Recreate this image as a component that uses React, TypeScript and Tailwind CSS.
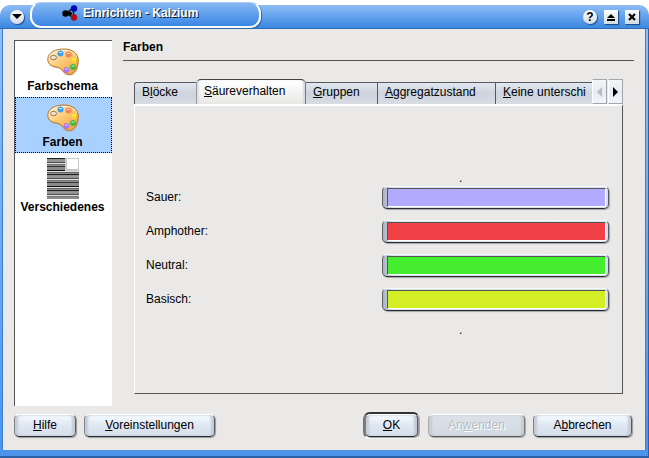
import { useState, type ReactNode } from "react";

function Palette() {
  return (
    <svg width="32" height="32" viewBox="0 0 32 32" aria-hidden="true">
      <defs>
        <linearGradient id="wood" x1="0" y1="0" x2="1" y2="1">
          <stop offset="0" stopColor="#fff3d2" />
          <stop offset="0.5" stopColor="#fdc873" />
          <stop offset="1" stopColor="#f39a30" />
        </linearGradient>
      </defs>
      <path d="M2 14C3 8 10 4.500 17 4.500C26 4.500 32 10 32 16C32 23 29 30 23 30C16 30 16 24 12 23C8 22 1 22 1.500 15Z" fill="#b5a58c" opacity="0.35" />
      <path d="M.8 12.500C1.500 6 9 3 17 3C25.500 3 31.200 7.500 31.200 14C31.200 22 27.500 28.500 22.500 28.500C15.500 28.500 16 22.500 11.500 21.500C7.500 20.500.2 20 .8 12.500Z" fill="url(#wood)" stroke="#bd7420" strokeWidth="1" />
      <path d="M2.500 11.500C3.500 7 10 4.500 16 4.500C23 4.500 28 7 29.500 11" fill="none" stroke="#fff8e6" strokeWidth="1" />
      <ellipse cx="6.500" cy="11.500" rx="3" ry="2.200" fill="#e9e4dc" stroke="#99774a" />
      <circle cx="13.500" cy="7.500" r="3" fill="#3f9fe8" />
      <circle cx="21.500" cy="8.500" r="3" fill="#f58250" />
      <circle cx="27" cy="14" r="2.800" fill="#f7dc1c" />
      <circle cx="26" cy="21" r="3" fill="#3dbb3c" />
      <circle cx="19.500" cy="24" r="3" fill="#a978e8" />
      <path d="M12 6.500h3M20 7.500h3M25.700 13h2.600M24.500 20h3M18 23h3" stroke="#fff" strokeOpacity="0.75" />
    </svg>
  );
}

function StripedSheet() {
  const tones = ["#222", "#999", "#555", "#777", "#333", "#888", "#111", "#666"];
  return (
    <svg width="32" height="41" viewBox="0 0 32 41" shapeRendering="crispEdges" aria-hidden="true">
      <rect width="32" height="41" fill="#8d8d8d" />
      {Array.from({ length: 20 }, (_, i) => (
        <g key={i}>
          <rect y={i * 2} width="32" height="1" fill={tones[i % 8]} />
          {i % 4 === 2 && <rect y={i * 2 + 1} width="32" height="1" fill="#ddd" />}
        </g>
      ))}
      <rect x="18" width="14" height="13" fill="#c9c9c9" />
      <rect x="20" y="1" width="11" height="10" fill="#fff" />
    </svg>
  );
}

function Molecule() {
  return (
    <svg width="16" height="16" viewBox="0 0 16 16" aria-hidden="true">
      <path d="M11 3L4 8.500L12 13Z" stroke="#111" strokeWidth="1.500" fill="none" />
      <circle cx="3.500" cy="8.500" r="3.200" fill="#000" />
      <circle cx="8" cy="8.500" r="2" fill="#000" />
      <circle cx="12" cy="3.500" r="3.200" fill="#0505b8" />
      <circle cx="12" cy="12.500" r="3.200" fill="#b50a0f" />
    </svg>
  );
}

const titleButton =
  "flex size-[14px] items-center justify-center bg-linear-to-b from-white to-[#d3dbe4] shadow-[1px_1px_1px_#1d4f8d]";

function TitleBar() {
  return (
    <header className="bg-white pt-[5px]">
      <div className="flex h-6 items-center rounded-t-[10px] border-b border-[#2f6cb5] bg-linear-to-b from-[#8fbdf3] via-[#62a2ee] to-[#3b87e0] pr-[10px] pl-[10px]">
        <button aria-label="Fenstermenü" className={`${titleButton} rounded-full`}>
          <svg width="10" height="5" viewBox="0 0 10 5" aria-hidden="true"><path d="M0 0H10L5 5Z" /></svg>
        </button>
        <div className="-mt-[3px] ml-[6px] flex h-[26px] w-[231px] shrink-0 items-center gap-[5px] self-start rounded-[11px] border-2 border-t border-white border-t-[#a8ccf6] bg-linear-to-b from-[#85b7f2] via-[#5f9fec] to-[#3a86e4] pr-3 pb-[3px] pl-[30px] shadow-[1px_1px_1px_#2b66ad]">
          <Molecule />
          <h1 className="text-[12px] leading-4 font-bold whitespace-nowrap text-white [text-shadow:1px_1px_0_#0a1e38]">
            Einrichten - Kalzium
          </h1>
        </div>
        <div className="ml-auto flex gap-[7px]">
          <button aria-label="Hilfe zum Fenster" className={`${titleButton} rounded-full text-[12px] leading-[14px] font-bold`}>?</button>
          <button aria-label="Maximieren" className={titleButton}>
            <svg width="8" height="8" viewBox="0 0 8 8" aria-hidden="true"><path d="M0 5L4 1L8 5ZM0 6H8V8H0Z" /></svg>
          </button>
          <button aria-label="Schließen" className={titleButton}>
            <svg width="8" height="8" viewBox="0 0 8 8" aria-hidden="true"><path d="M1 1L7 7M7 1L1 7" stroke="#000" strokeWidth="2.200" /></svg>
          </button>
        </div>
      </div>
    </header>
  );
}

const pages = [
  { name: "Farbschema", icon: <Palette /> },
  { name: "Farben", icon: <Palette /> },
  { name: "Verschiedenes", icon: <StripedSheet /> },
];

function Sidebar() {
  const [current, setCurrent] = useState("Farben");
  return (
    <nav className="flex w-[98px] shrink-0 flex-col border-t border-l border-[#555] bg-white">
      {pages.map((p) => (
        <button
          key={p.name}
          onClick={() => setCurrent(p.name)}
          className={`flex flex-col items-center border border-dotted pt-1 pr-[2px] pb-[2px] text-[12px] leading-4 font-bold ${
            p.name === current ? "border-black bg-[#a9d1ff]" : "border-transparent"
          }`}
        >
          {p.icon}
          {p.name}
        </button>
      ))}
    </nav>
  );
}

const tabs = [
  { id: "bloecke", label: <>B<u>l</u>öcke</>, width: "w-[62px] shrink-0" },
  { id: "saeure", label: <><u>S</u>äureverhalten</>, width: "w-[110px] shrink-0" },
  { id: "gruppen", label: <><u>G</u>ruppen</>, width: "w-[71px] shrink-0" },
  { id: "aggregat", label: <><u>A</u>ggregatzustand</>, width: "w-[118px] shrink-0" },
  { id: "keine", label: <><u>K</u>eine unterschi</>, width: "flex-1" },
];

const scroller =
  "flex h-[25px] w-[15px] shrink-0 items-center justify-center border border-[#a2a6ac] border-l-white bg-linear-to-b from-[#f4f6f8] via-[#e6ecf2] to-[#f2f6fa] outline-none";

function TabBar() {
  const [current, setCurrent] = useState("saeure");
  return (
    <div className="flex items-end">
      <div role="tablist" className="flex h-[25px] min-w-0 flex-1 items-end">
        {tabs.map((t, i) => (
          <button
            key={t.id}
            role="tab"
            aria-selected={t.id === current}
            onClick={() => setCurrent(t.id)}
            className={`border-t border-[#55585c] pl-[7px] text-left text-[12px] whitespace-nowrap ${t.width} ${
              t.id === current
                ? "h-[25px] rounded-t-[5px] border-t-[#444] border-r border-r-[#777] border-l border-l-[#999] bg-linear-to-b from-white via-[#f3f4f3] to-[#e9e8e6] pb-[2px] shadow-[inset_2px_0_1px_#dfe2e2,inset_-2px_0_1px_#d8dcdc]"
                : `h-[22px] bg-linear-to-b from-[#e2e8f1] via-[#cdd4de] to-[#d8dde2] pb-[3px] ${i === 0 ? "rounded-tl-[3px] border-l" : i > 2 ? "border-l" : ""}`
            }`}
          >
            {t.label}
          </button>
        ))}
      </div>
      <div className="flex gap-px">
        <button aria-label="Vorherige Reiter" disabled className={scroller}>
          <svg width="5" height="10" viewBox="0 0 5 10" aria-hidden="true"><path d="M5 0V10L0 5Z" fill="#bbb" /></svg>
        </button>
        <button aria-label="Nächste Reiter" className={scroller}>
          <svg width="5" height="10" viewBox="0 0 5 10" aria-hidden="true"><path d="M0 0V10L5 5Z" /></svg>
        </button>
      </div>
    </div>
  );
}

const colours = [
  { id: "sauer", label: "Sauer:", fill: "bg-[#b2aaff]" },
  { id: "amphother", label: "Amphother:", fill: "bg-[#f04147]" },
  { id: "neutral", label: "Neutral:", fill: "bg-[#44ee2e]" },
  { id: "basisch", label: "Basisch:", fill: "bg-[#d3ee24]" },
];

function ColourPanel() {
  return (
    <div role="tabpanel" className="flex flex-1 flex-col justify-center border border-t-2 border-[#555] border-t-white border-l-white pt-[9px] pr-[13px] pl-[11px]">
      <div className="grid grid-cols-2 gap-x-[9px] text-[12px] leading-4">
        <span className="col-start-2 pl-[77px]">.</span>
      </div>
      <div className="mb-1 flex flex-col gap-[11px]">
        {colours.map((c) => (
          <div key={c.id} className="grid grid-cols-2 items-center gap-x-[9px]">
            <label htmlFor={c.id} className="pb-px text-[12px] leading-4">{c.label}</label>
            <button
              id={c.id}
              className="h-[23px] rounded-[5px] border border-t-[#f2fafa] border-r-[#555c66] border-b-[#282c34] border-l-[#5b626c] bg-linear-to-r from-[#aab4c0] via-[#d8e2ee] via-5% to-[#d5e0ec] py-px pr-[2px] pl-1 shadow-[1px_1px_1px_#a5a5a5]"
            >
              <span className={`block h-[19px] border border-t-[#555] border-r-white border-b-white border-l-[#555] ${c.fill}`} />
            </button>
          </div>
        ))}
      </div>
      <div className="grid grid-cols-2 gap-x-[9px] pt-[7px] text-[12px] leading-4">
        <span className="col-start-2 pl-[77px]">.</span>
      </div>
    </div>
  );
}

function PushButton({ children, width, disabled = false }: { children: ReactNode; width: string; disabled?: boolean }) {
  return (
    <button
      disabled={disabled}
      className={`h-[23px] rounded-[5px] border border-t-white pb-[2px] text-[12px] leading-4 ${width} ${
        disabled
          ? "border-r-[#777] border-b-[#555] border-l-[#aaa] bg-linear-to-b from-[#dce2e8] to-[#d2d9e2] text-[#b9bcc0] shadow-[1px_1px_1px_#aaa,inset_3px_0_2px_#c5ccd4,inset_-3px_0_2px_#c5ccd4] [text-shadow:1px_1px_0_#fff]"
          : "border-r-[#555c66] border-b-[#282c34] border-l-[#7b828c] bg-linear-to-b from-[#f5fbff] via-[#dfe7f1] to-[#d6dfea] shadow-[1px_1px_1px_#999,inset_3px_0_2px_#c3ccd7,inset_-3px_0_2px_#c3ccd7]"
      }`}
    >
      {children}
    </button>
  );
}

export default function App() {
  return (
    <div className="flex min-h-screen flex-col bg-white font-['Liberation_Sans',Arial,sans-serif] text-black">
      <TitleBar />
      <div className="flex flex-1 border-r border-b-2 border-[#2a62a8] bg-linear-to-b from-[#90bef5] to-[#4b94ea] pr-[2px] pb-[6px] pl-[2px]">
        <div className="flex min-w-0 flex-1 flex-col border-r border-l border-[#3b7fd4] bg-[#eae9e7] pt-[11px] pr-[11px] pb-[13px] pl-[11px]">
          <main className="flex flex-1 gap-[11px]">
            <Sidebar />
            <section className="flex min-w-0 flex-1 flex-col">
              <h2 className="border-b border-[#555] pb-[6px] text-[12px] leading-[14px] font-bold">Farben</h2>
              <div className="flex flex-1 flex-col pt-[18px] pr-[11px] pb-3 pl-[11px]">
                <TabBar />
                <ColourPanel />
              </div>
            </section>
          </main>
          <footer className="flex items-center gap-2 pt-2 pr-[2px]">
            <PushButton width="w-[62px]"><u>H</u>ilfe</PushButton>
            <PushButton width="w-[131px]"><u>V</u>oreinstellungen</PushButton>
            <div className="-my-[2px] ml-auto flex rounded-[7px] border-2 border-t-[#333] border-r-[#aaa] border-b-white border-l-[#777] bg-[#777]">
              <PushButton width="w-[53px]"><u>O</u>K</PushButton>
            </div>
            <PushButton width="w-[97px]" disabled>An<u>w</u>enden</PushButton>
            <PushButton width="w-[99px]">A<u>b</u>brechen</PushButton>
          </footer>
        </div>
      </div>
    </div>
  );
}
